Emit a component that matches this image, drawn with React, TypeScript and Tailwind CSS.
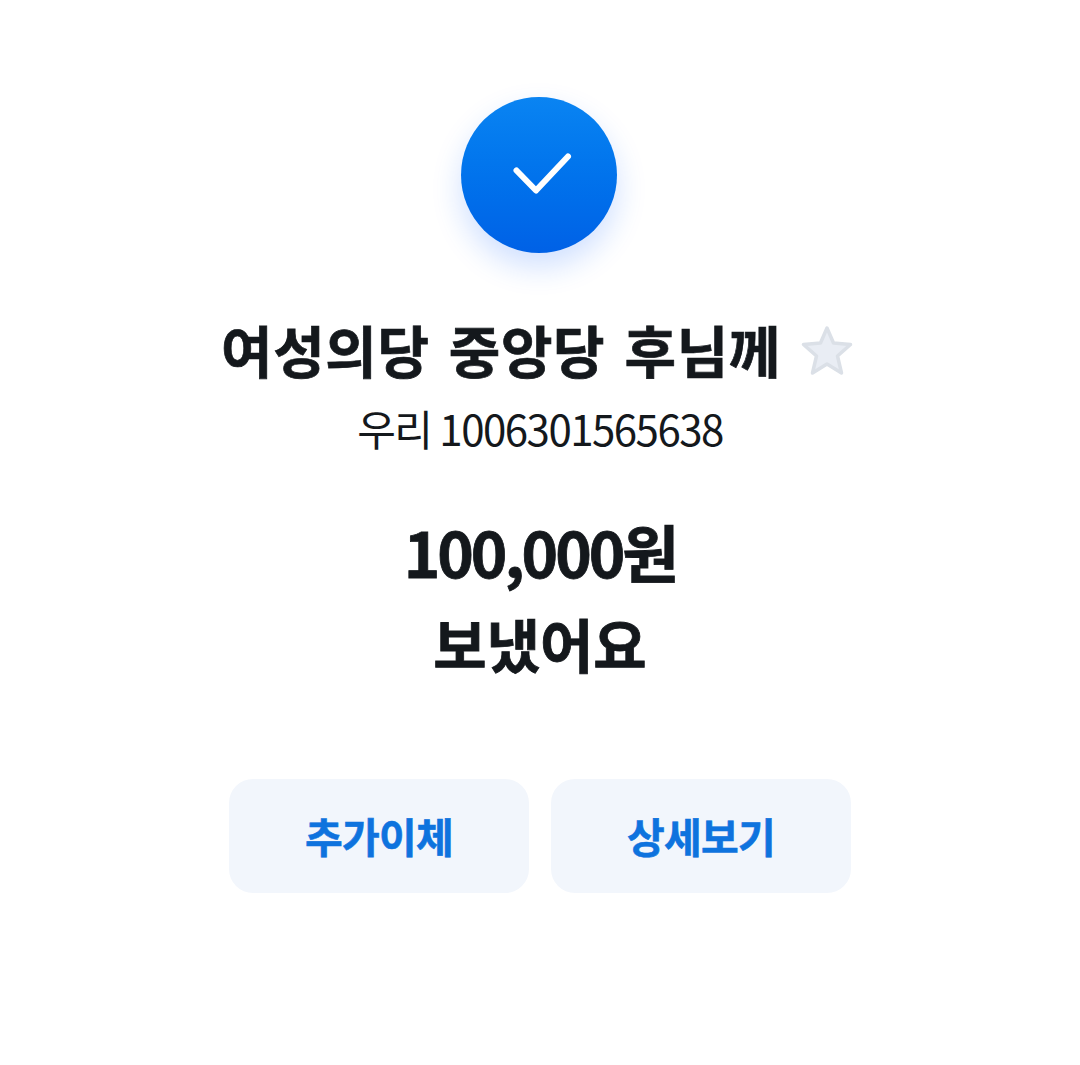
const font = { fontFamily: '"Noto Sans CJK KR", "Noto Sans", sans-serif' }

export default function App() {
  return (
    <div className="min-h-[1065px] bg-white flex flex-col items-center pt-[97px]" style={font}>
      <div className="w-[156px] h-[156px] mr-[2px] rounded-full bg-gradient-to-b from-[#0a84f2] to-[#0061e6] shadow-[0_14px_30px_rgba(20,100,255,0.2)] flex items-center justify-center">
        <svg width="70" height="70" viewBox="0 0 70 70" fill="none">
          <path d="M 12.5 30.5 L 32 50.5 L 64 16.5" stroke="white" strokeWidth="6" strokeLinecap="round" strokeLinejoin="round" />
        </svg>
      </div>

      <div className="mt-[66px] pr-[5px] flex items-center h-[60px]">
        <h1 className="text-[56px] font-bold tracking-[0.6px] [word-spacing:6px] [-webkit-text-stroke:0.7px_#14181c] text-[#14181c] leading-[60px]">여성의당 중앙당 후님께</h1>
        <svg className="ml-[19px] mt-[3px]" width="54" height="54" viewBox="0 0 54 54">
          <path d="M27 4 L33.5 19 L50.5 20.5 L37.5 32 L41.5 49 L27 40 L12.5 49 L16.5 32 L3.5 20.5 L20.5 19 Z" fill="#e9edf4" stroke="#dbe0e7" strokeWidth="3.5" strokeLinejoin="round" />
        </svg>
      </div>
      <p className="mt-[23px] text-[42px] tracking-[-1.5px] font-normal text-[#14181c] leading-[52px]">우리 1006301565638</p>

      <p className="mt-[59px] text-[62px] font-bold tracking-[-3px] [-webkit-text-stroke:0.8px_#14181c] text-[#14181c] leading-[76px]">100,000원</p>
      <p className="mt-[19px] text-[58px] font-bold [-webkit-text-stroke:0.8px_#14181c] text-[#14181c] leading-[70px]">보냈어요</p>

      <div className="mt-[101px] flex gap-[22px]">
        <button className="w-[300px] h-[114px] rounded-[24px] bg-[#f2f6fc] text-[#0e73de] text-[41px] font-bold tracking-[-0.75px] [-webkit-text-stroke:0.6px_#0e73de]">추가이체</button>
        <button className="w-[300px] h-[114px] rounded-[24px] bg-[#f2f6fc] text-[#0e73de] text-[41px] font-bold tracking-[-0.75px] [-webkit-text-stroke:0.6px_#0e73de]">상세보기</button>
      </div>
    </div>
  )
}
